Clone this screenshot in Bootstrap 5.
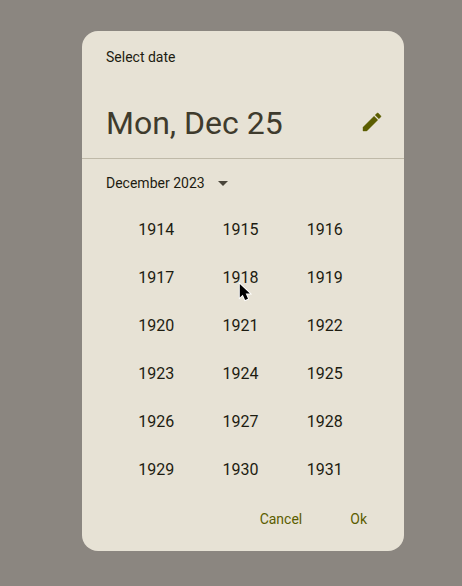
<!DOCTYPE html>
<html lang="en">
<head>
<meta charset="utf-8">
<meta name="viewport" content="width=device-width, initial-scale=1">
<title>Select date</title>
<link href="https://cdn.jsdelivr.net/npm/bootstrap@5.3.0/dist/css/bootstrap.min.css" rel="stylesheet">
<style>
  body { background: #8b8680; color: #1d1c11; font-family: Roboto, "Liberation Sans", sans-serif; font-size: 14px; line-height: 20px; }
  .backdrop-area { padding: 31px 0 35px 24px; }
  .date-dialog { width: 100%; max-width: 322px; background: #e7e2d5; border-radius: 16px; }
  .dialog-head { padding: 16px 20px 15px 24px; border-bottom: 1px solid #bfb9a8; }
  .headline { font-size: 32px; line-height: 40px; color: #3f3b2d; font-weight: 400; }
  .head-row { margin-top: 36px; }
  .btn { --bs-btn-border-width: 0; --bs-btn-font-size: 14px; --bs-btn-line-height: 20px; --bs-btn-padding-x: 0; --bs-btn-padding-y: 0; --bs-btn-color: #1d1c11; }
  .btn-olive { --bs-btn-color: #5b5d00; --bs-btn-hover-color: #5b5d00; }
  .edit-btn { height: 26px; }
  .month-bar { padding: 14px 24px 13px; }
  .month-btn { gap: 13px; }
  .year-grid { padding: 0 37px 0 32px; }
  .year-btn { --bs-btn-font-size: 16px; height: 48px; }
  .pointer { top: 28px; left: 50%; margin-left: -2px; pointer-events: none; }
  .dialog-actions { padding: 15px 37px 22px; gap: 48px; }
</style>
<script src="https://cdn.jsdelivr.net/npm/bootstrap@5.3.0/dist/js/bootstrap.bundle.min.js" defer></script>
</head>
<body>
<main class="backdrop-area d-flex justify-content-center min-vh-100 align-items-start">
  <section class="date-dialog" role="dialog" aria-labelledby="dialog-title">
    <header class="dialog-head">
      <p class="mb-0" id="dialog-title">Select date</p>
      <div class="head-row d-flex align-items-center justify-content-between">
        <h1 class="headline mb-0">Mon, Dec 25</h1>
        <button type="button" class="btn btn-olive edit-btn d-flex" aria-label="Enter date">
          <svg width="24" height="24" viewBox="0 0 24 24" fill="currentColor" aria-hidden="true"><path d="M3 17.25V21h3.75L17.81 9.94l-3.75-3.75L3 17.25zM20.71 7.04a1 1 0 0 0 0-1.41l-2.34-2.34a1 1 0 0 0-1.41 0l-1.83 1.83 3.75 3.75 1.83-1.83z" stroke="currentColor" stroke-width=".4"/></svg>
        </button>
      </div>
    </header>
    <div class="month-bar d-flex">
      <button type="button" class="btn month-btn d-flex align-items-center" aria-expanded="true">December 2023
        <svg width="10" height="5" viewBox="0 0 10 5" fill="#49453a" aria-hidden="true"><path d="M0 0h10L5 5z"/></svg>
      </button>
    </div>
    <div class="year-grid">
      <div class="row g-0">
        <div class="col-4"><button type="button" class="btn year-btn w-100">1914</button></div>
        <div class="col-4"><button type="button" class="btn year-btn w-100">1915</button></div>
        <div class="col-4"><button type="button" class="btn year-btn w-100">1916</button></div>
        <div class="col-4"><button type="button" class="btn year-btn w-100">1917</button></div>
        <div class="col-4 position-relative"><button type="button" class="btn year-btn w-100">1918</button>
          <svg class="pointer position-absolute" width="14" height="20" viewBox="0 0 14 20" aria-hidden="true"><path d="M1.8 2v13.4l3-2.7 2.3 5.4 2.9-1.3-2.3-5.2h4.2z" fill="#000" stroke="#fff" stroke-width="1.8" paint-order="stroke"/></svg>
        </div>
        <div class="col-4"><button type="button" class="btn year-btn w-100">1919</button></div>
        <div class="col-4"><button type="button" class="btn year-btn w-100">1920</button></div>
        <div class="col-4"><button type="button" class="btn year-btn w-100">1921</button></div>
        <div class="col-4"><button type="button" class="btn year-btn w-100">1922</button></div>
        <div class="col-4"><button type="button" class="btn year-btn w-100">1923</button></div>
        <div class="col-4"><button type="button" class="btn year-btn w-100">1924</button></div>
        <div class="col-4"><button type="button" class="btn year-btn w-100">1925</button></div>
        <div class="col-4"><button type="button" class="btn year-btn w-100">1926</button></div>
        <div class="col-4"><button type="button" class="btn year-btn w-100">1927</button></div>
        <div class="col-4"><button type="button" class="btn year-btn w-100">1928</button></div>
        <div class="col-4"><button type="button" class="btn year-btn w-100">1929</button></div>
        <div class="col-4"><button type="button" class="btn year-btn w-100">1930</button></div>
        <div class="col-4"><button type="button" class="btn year-btn w-100">1931</button></div>
      </div>
    </div>
    <footer class="dialog-actions d-flex justify-content-end">
      <button type="button" class="btn btn-olive">Cancel</button>
      <button type="button" class="btn btn-olive">Ok</button>
    </footer>
  </section>
</main>
</body>
</html>
